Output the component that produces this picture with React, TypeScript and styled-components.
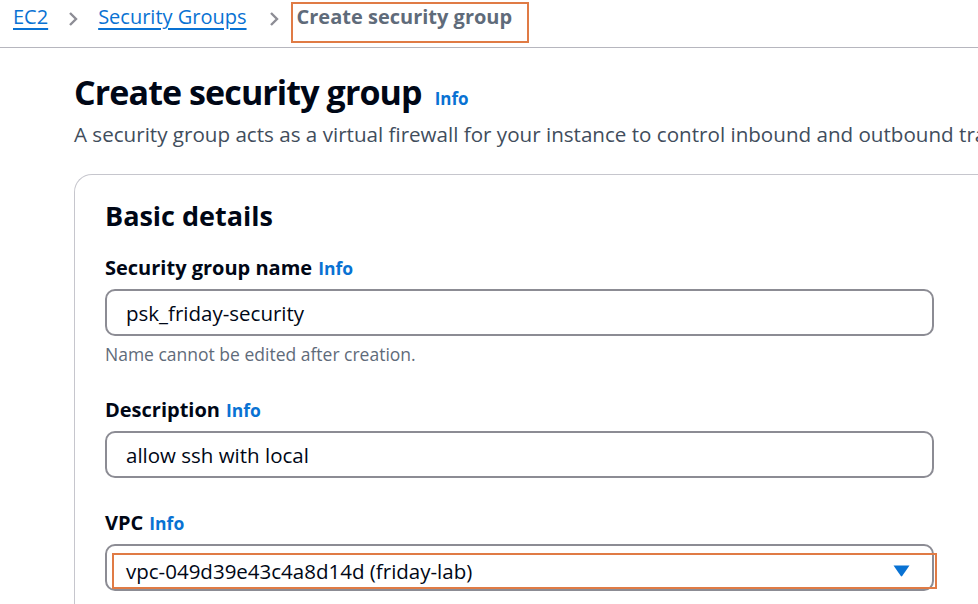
import styled, { createGlobalStyle } from "styled-components"

const Global = createGlobalStyle`
    body{
        margin: 0;
        background: #ffffff;
        font-family: "Open Sans", "Noto Sans", sans-serif;
        color: #000716;
        overflow: hidden;
    }
`

const Page = styled.div`
    width: 978px;
    height: 604px;
    overflow: hidden;
    display: flex;
    flex-direction: column;
`

const Breadcrumbs = styled.nav`
    display: flex;
    flex-shrink: 0;
    align-items: flex-start;
    height: 48px;
    padding: 2px 0 0 13px;
    border-bottom: 1px solid #b6b6be;
    box-sizing: border-box;
    font-size: 20px;
`

const Crumb = styled.a`
    color: #0972d3;
    text-decoration: underline;
    text-underline-offset: 4px;
    text-decoration-thickness: 2px;
    line-height: 26px;
    margin-top: 2px;
`

const Chevron = styled.span<{ $left: number; $right: number }>`
    display: flex;
    margin: 9px ${p => p.$right}px 0 ${p => p.$left}px;
    svg{
        display: block;
    }
`

const Current = styled.span`
    color: #5f6b7a;
    font-weight: 700;
    border: 2px solid #e07b45;
    padding: 0 15px 11px 4px;
    line-height: 26px;
`

const Main = styled.main`
    flex-shrink: 0;
    padding: 22px 0 0 74px;
    display: flex;
    flex-direction: column;
`

const TitleRow = styled.div`
    display: flex;
    align-items: baseline;
    gap: 13px;
    h1{
        margin: 0;
        font-size: 34px;
        font-weight: 700;
        line-height: 44px;
        color: #000716;
        letter-spacing: -0.9px;
    }
`

const Info = styled.a<{ $size?: number }>`
    color: #0972d3;
    font-weight: 700;
    font-size: ${p => p.$size ?? 17.5}px;
    text-decoration: none;
`

const Lead = styled.p`
    margin: 7px 0 0 0;
    font-size: 20.6px;
    line-height: 26px;
    color: #414d5c;
    white-space: nowrap;
`

const Card = styled.section`
    margin-top: 27px;
    border: 1px solid #c6c6cd;
    border-right: none;
    border-radius: 18px 0 0 0;
    padding: 23px 0 0 30px;
    height: 460px;
    box-sizing: border-box;
    h2{
        margin: 0;
        font-size: 27px;
        line-height: 36px;
        font-weight: 700;
        color: #000716;
    }
`

const Field = styled.div<{ $gap: number }>`
    margin-top: ${p => p.$gap}px;
    width: 829px;
    display: flex;
    flex-direction: column;
`

const Label = styled.label`
    display: flex;
    align-items: baseline;
    gap: 6px;
    font-size: 20px;
    font-weight: 700;
    line-height: 28px;
    color: #000716;
    margin-bottom: 7px;
`

const Input = styled.div`
    height: 47px;
    border: 2px solid #8c8c94;
    border-radius: 10px;
    box-sizing: border-box;
    display: flex;
    align-items: center;
    padding-left: 19px;
    font-size: 20.5px;
    color: #000716;
`

const Hint = styled.div`
    margin-top: 6px;
    font-size: 17.5px;
    line-height: 24px;
    color: #5f6b7a;
`

const Select = styled.div`
    height: 47px;
    border: 2px solid #8c8c94;
    border-radius: 10px;
    box-sizing: border-box;
    padding: 7px 0 0 5px;
`

const Highlight = styled.div`
    height: 36px;
    margin-right: -5px;
    border: 2px solid #e07b45;
    box-sizing: border-box;
    display: flex;
    align-items: center;
    justify-content: space-between;
    padding: 0 25px 0 12px;
    font-size: 20.5px;
    color: #000716;
`

function Caret() {
    return (
        <svg width="17" height="12" viewBox="0 0 17 12">
            <path d="M0.5 0.5 L16.5 0.5 L9.2 11 Q8.5 11.8 7.8 11 Z" fill="#0972d3" />
        </svg>
    )
}

function Arrow() {
    return (
        <svg width="12" height="16" viewBox="0 0 12 16">
            <path d="M3 2 L9 8 L3 14" stroke="#8d8d95" strokeWidth="2.4" fill="none" />
        </svg>
    )
}

export default function App() {
    return (
        <Page>
            <Global />
            <Breadcrumbs>
                <Crumb href="#">EC2</Crumb>
                <Chevron $left={19} $right={19}><Arrow /></Chevron>
                <Crumb href="#">Security Groups</Crumb>
                <Chevron $left={21} $right={11}><Arrow /></Chevron>
                <Current>Create security group</Current>
            </Breadcrumbs>
            <Main>
                <TitleRow>
                    <h1>Create security group</h1>
                    <Info href="#" $size={17}>Info</Info>
                </TitleRow>
                <Lead>A security group acts as a virtual firewall for your instance to control inbound and outbound traffic.</Lead>
                <Card>
                    <h2>Basic details</h2>
                    <Field $gap={20}>
                        <Label>Security group name <Info href="#">Info</Info></Label>
                        <Input>psk_friday-security</Input>
                        <Hint>Name cannot be edited after creation.</Hint>
                    </Field>
                    <Field $gap={30}>
                        <Label>Description <Info href="#">Info</Info></Label>
                        <Input>allow ssh with local</Input>
                    </Field>
                    <Field $gap={31}>
                        <Label>VPC <Info href="#">Info</Info></Label>
                        <Select>
                            <Highlight>
                                <span>vpc-049d39e43c4a8d14d (friday-lab)</span>
                                <Caret />
                            </Highlight>
                        </Select>
                    </Field>
                </Card>
            </Main>
        </Page>
    )
}
